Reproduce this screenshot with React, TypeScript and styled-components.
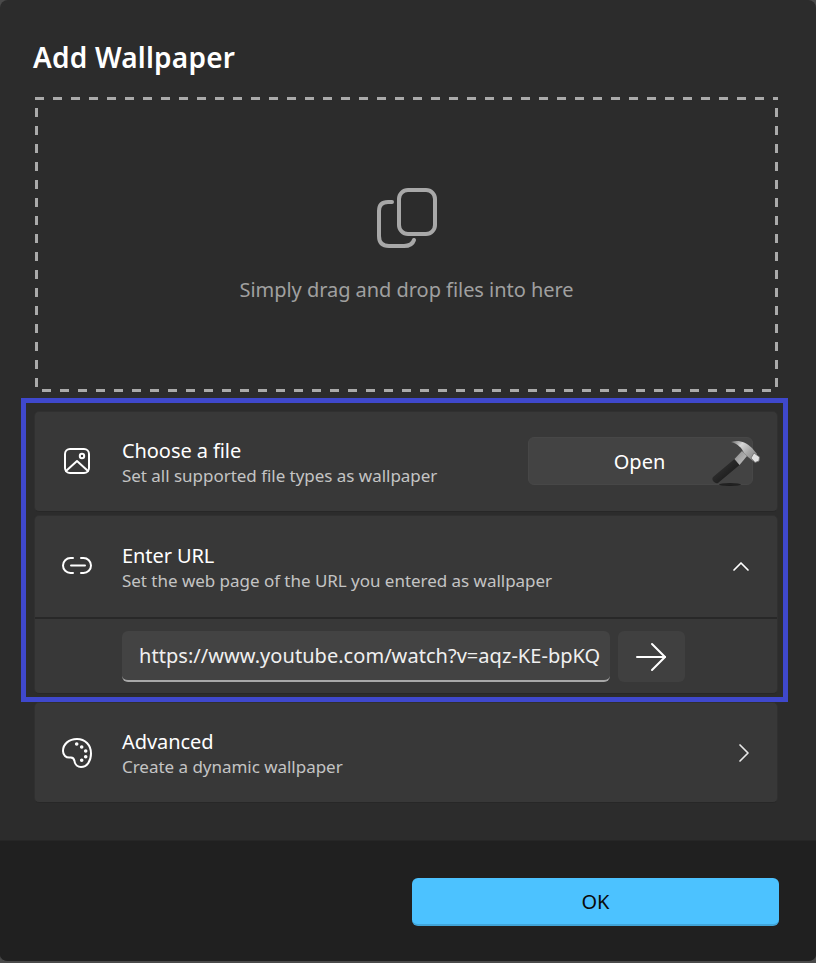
import React from "react";
import styled, { createGlobalStyle } from "styled-components";

const Global = createGlobalStyle`
  html, body { margin: 0; padding: 0; background: #4a4a4a; }
  * { box-sizing: border-box; }
`;

const FONT = `"Noto Sans", "Open Sans", sans-serif`;

const Dialog = styled.div`
  width: 816px;
  height: 963px;
  display: flex;
  flex-direction: column;
  background: #2c2c2c;
  border-radius: 8px;
  border-bottom: 2px solid #4a4a4a;
  overflow: hidden;
  font-family: ${FONT};
  color: #fff;
`;

const Body = styled.div`
  position: relative;
  height: 840px;
  flex: none;
  padding: 0 38px 0 34px;
`;

const Title = styled.h1`
  margin: 0 0 0 -1px;
  height: 97px;
  padding: 36px 0 0;
  font-size: 28px;
  line-height: 42px;
  font-weight: 600;
  letter-spacing: 0.2px;
`;

const DropZone = styled.div`
  margin-left: 1px;
  height: 295px;
  margin-bottom: 19px;
  display: flex;
  flex-direction: column;
  align-items: center;
  color: #a0a0a0;
  font-size: 20px;
  --d: #aaaaaa;
  background-image:
    repeating-linear-gradient(90deg, var(--d) 0 9px, transparent 9px 18px),
    repeating-linear-gradient(90deg, transparent 0 7px, var(--d) 7px 16px, transparent 16px 18px),
    repeating-linear-gradient(180deg, var(--d) 0 2px, transparent 2px 11px, var(--d) 11px 18px),
    repeating-linear-gradient(180deg, var(--d) 0 2px, transparent 2px 11px, var(--d) 11px 18px);
  background-size: 100% 3px, 100% 3px, 3px 100%, 3px 100%;
  background-position: 0 0, 0 100%, 0 0, 100% 0;
  background-repeat: no-repeat;
`;

const DropIcon = styled.svg`
  margin-top: 90px;
  width: 62px;
  height: 62px;
  display: block;
`;

const DropText = styled.div`
  margin-top: 27px;
  line-height: 28px;
  letter-spacing: -0.04px;
`;

const Card = styled.section<{ $h: number; $gap: number; $top?: number }>`
  height: ${p => p.$h}px;
  margin-bottom: ${p => p.$gap}px;
  padding-top: ${p => p.$top ?? 0}px;
  background: #383838;
  border: 1px solid #303030;
  border-bottom-color: #272727;
  border-radius: 5px;
  display: flex;
  flex-direction: column;
`;

const Row = styled.div`
  height: 100px;
  flex: none;
  display: flex;
  align-items: center;
  padding-right: 24px;
`;

const IconSlot = styled.div<{ $x: number; $y?: number }>`
  width: 87px;
  flex: none;
  display: flex;
  justify-content: flex-start;
  padding-left: ${p => p.$x}px;
  margin-top: ${p => p.$y ?? 0}px;
`;

const TextCol = styled.div`
  flex: 1;
  display: flex;
  flex-direction: column;
`;

const RowTitle = styled.div`
  font-size: 20px;
  line-height: 26px;
  letter-spacing: -0.08px;
  color: #fff;
`;

const RowSub = styled.div`
  font-size: 17px;
  line-height: 23px;
  letter-spacing: -0.03px;
  color: #c4c4c4;
`;

const OpenButton = styled.button`
  position: relative;
  width: 225px;
  height: 48px;
  margin-top: -2px;
  border: 1px solid #474747;
  border-radius: 6px;
  background: #434343;
  color: #fff;
  font: 400 20px ${FONT};
  padding: 0 2px 0 0;
`;

const HammerArt = styled.svg`
  position: absolute;
  left: 183px;
  top: 1px;
  width: 49px;
  height: 49px;
`;

const Chevron = styled.svg<{ $mr: number }>`
  width: 20px;
  height: 20px;
  flex: none;
  margin-right: ${p => p.$mr}px;
  fill: none;
  stroke-width: 1.7;
  stroke-linecap: round;
  stroke-linejoin: round;
`;

const Divider = styled.div`
  height: 2px;
  background: #282828;
  flex: none;
`;

const UrlRow = styled.div`
  display: flex;
  gap: 8px;
  padding: 12px 0 0 87px;
`;

const UrlInput = styled.div`
  width: 488px;
  height: 51px;
  background: #434343;
  border-radius: 6px;
  border-bottom: 2px solid #a8a8a8;
  padding-left: 17px;
  font-size: 20px;
  line-height: 49px;
  letter-spacing: 0.04px;
  color: #f0f0f0;
  white-space: nowrap;
  overflow: hidden;
`;

const GoButton = styled.button`
  width: 67px;
  height: 51px;
  border: none;
  border-radius: 6px;
  background: #404040;
  display: flex;
  align-items: center;
  justify-content: center;
  padding: 0 2px 0 0;
`;

const Footer = styled.footer`
  flex: 1;
  background: #202020;
  border-top: 1px solid #262626;
  display: flex;
  justify-content: flex-end;
  padding: 37px 37px 0 0;
`;

const OkButton = styled.button`
  width: 367px;
  height: 48px;
  border: none;
  border-bottom: 2px solid #41a5d9;
  border-radius: 6px;
  background: #4cc2ff;
  color: #0a0a0a;
  font: 400 20px ${FONT};
  padding: 0;
`;

const Highlight = styled.div`
  position: absolute;
  left: 21px;
  top: 398px;
  width: 767px;
  height: 304px;
  border: 5px solid #3f48cc;
  pointer-events: none;
`;

const Ico = styled.svg`
  display: block;
  flex: none;
  fill: none;
  stroke: #fff;
  stroke-linecap: round;
  stroke-linejoin: round;
`;

function Hammer() {
  return (
    <HammerArt viewBox="0 0 49 49">
      <defs>
        <linearGradient id="head" x1="0" y1="0" x2="1" y2="0.7">
          <stop offset="0" stopColor="#6a6a6a" />
          <stop offset="0.35" stopColor="#d8d8d8" />
          <stop offset="0.7" stopColor="#a8a8a8" />
          <stop offset="1" stopColor="#8a8a8a" />
        </linearGradient>
        <linearGradient id="grip" x1="0" y1="0" x2="1" y2="1">
          <stop offset="0" stopColor="#3c3c3c" />
          <stop offset="1" stopColor="#0f0f0f" />
        </linearGradient>
        <linearGradient id="neck" x1="0" y1="0" x2="1" y2="1">
          <stop offset="0" stopColor="#8a8a8a" />
          <stop offset="1" stopColor="#c4c4c4" />
        </linearGradient>
      </defs>
      <ellipse cx="18" cy="45.5" rx="11" ry="1.5" fill="#141414" opacity="0.75" />
      <path d="M1 38 Q-0.5 40.5 1.5 42.5 Q3.5 44.8 6 44 L27.5 26 L22.5 20 Z" fill="url(#grip)" />
      <path d="M22.5 20 L27.5 26 L35 17 L30 12 Z" fill="url(#neck)" />
      <path d="M19 3 C26 0.5 34 3 40 9 L45 15 L41 22 L36 18 L32 14 C30 9 26 5 19 3 Z" fill="url(#head)" />
      <path d="M42 14 L47.5 18 L47 22 L43 23.5 L39 19 Z" fill="#e2e2e2" stroke="#6e6e6e" strokeWidth="0.8" />
    </HammerArt>
  );
}

export default function App() {
  return (
    <>
      <Global />
      <Dialog>
        <Body>
          <Title>Add Wallpaper</Title>
          <DropZone>
            <DropIcon viewBox="0 0 62 62" fill="none" stroke="#a8a8a8" strokeWidth="4" strokeLinecap="round">
              <rect x="23" y="3" width="36" height="44" rx="9" />
              <path d="M16 15 H12 Q3 15 3 24 V49 Q3 59 13 59 H28 Q36 59 38 53" />
            </DropIcon>
            <DropText>Simply drag and drop files into here</DropText>
          </DropZone>

          <Card $h={101} $gap={3}>
            <Row>
              <IconSlot $x={28} $y={-2}>
                <Ico width="28" height="28" viewBox="0 0 28 28" strokeWidth="2">
                  <rect x="2" y="2" width="24" height="24" rx="5" />
                  <circle cx="19" cy="9" r="2.2" />
                  <path d="M3 24 L14 14 L25 24" />
                </Ico>
              </IconSlot>
              <TextCol>
                <RowTitle>Choose a file</RowTitle>
                <RowSub>Set all supported file types as wallpaper</RowSub>
              </TextCol>
              <OpenButton>
                Open
                <Hammer />
              </OpenButton>
            </Row>
          </Card>

          <Card $h={179} $gap={8} $top={1}>
            <Row>
              <IconSlot $x={26} $y={-2}>
                <Ico width="32" height="20" viewBox="0 0 32 20" strokeWidth="2">
                  <path d="M12 2 H9.5 A7.5 7.5 0 0 0 9.5 17 H12" />
                  <path d="M20 2 H22.5 A7.5 7.5 0 0 1 22.5 17 H20" />
                  <path d="M10 9.5 H24" />
                </Ico>
              </IconSlot>
              <TextCol>
                <RowTitle>Enter URL</RowTitle>
                <RowSub>Set the web page of the URL you entered as wallpaper</RowSub>
              </TextCol>
              <Chevron $mr={2} viewBox="0 0 20 20" stroke="#fff">
                <path d="M3 13 L10 6 L17 13" />
              </Chevron>
            </Row>
            <Divider />
            <UrlRow>
              <UrlInput>https://www.youtube.com/watch?v=aqz-KE-bpKQ</UrlInput>
              <GoButton>
                <Ico width="32" height="30" viewBox="0 0 32 30" strokeWidth="2">
                  <path d="M2 15 H30" />
                  <path d="M17 2 L30 15 L17 28" />
                </Ico>
              </GoButton>
            </UrlRow>
          </Card>

          <Card $h={101} $gap={0}>
            <Row>
              <IconSlot $x={26}>
                <Ico width="32" height="32" viewBox="0 0 32 32" strokeWidth="2">
                  <path d="M16 2 C8 2 2 7 2 14 C2 18 5 21 9 20.5 C12 20 13 21.5 13.5 24 C14 28 17 30 20 30 C26 30 30 24 30 16.5 C30 8 24 2 16 2 Z" />
                  <circle cx="15.7" cy="7" r="0.8" fill="#fff" />
                  <circle cx="20.7" cy="10" r="0.8" fill="#fff" />
                  <circle cx="24.7" cy="14" r="0.8" fill="#fff" />
                  <circle cx="24.7" cy="19.7" r="0.8" fill="#fff" />
                  <circle cx="20.7" cy="23.3" r="0.8" fill="#fff" />
                </Ico>
              </IconSlot>
              <TextCol>
                <RowTitle>Advanced</RowTitle>
                <RowSub>Create a dynamic wallpaper</RowSub>
              </TextCol>
              <Chevron $mr={-1} viewBox="0 0 20 20" stroke="#e8e8e8">
                <path d="M6 2 L14 10 L6 18" />
              </Chevron>
            </Row>
          </Card>
          <Highlight />
        </Body>
        <Footer>
          <OkButton>OK</OkButton>
        </Footer>
      </Dialog>
    </>
  );
}
